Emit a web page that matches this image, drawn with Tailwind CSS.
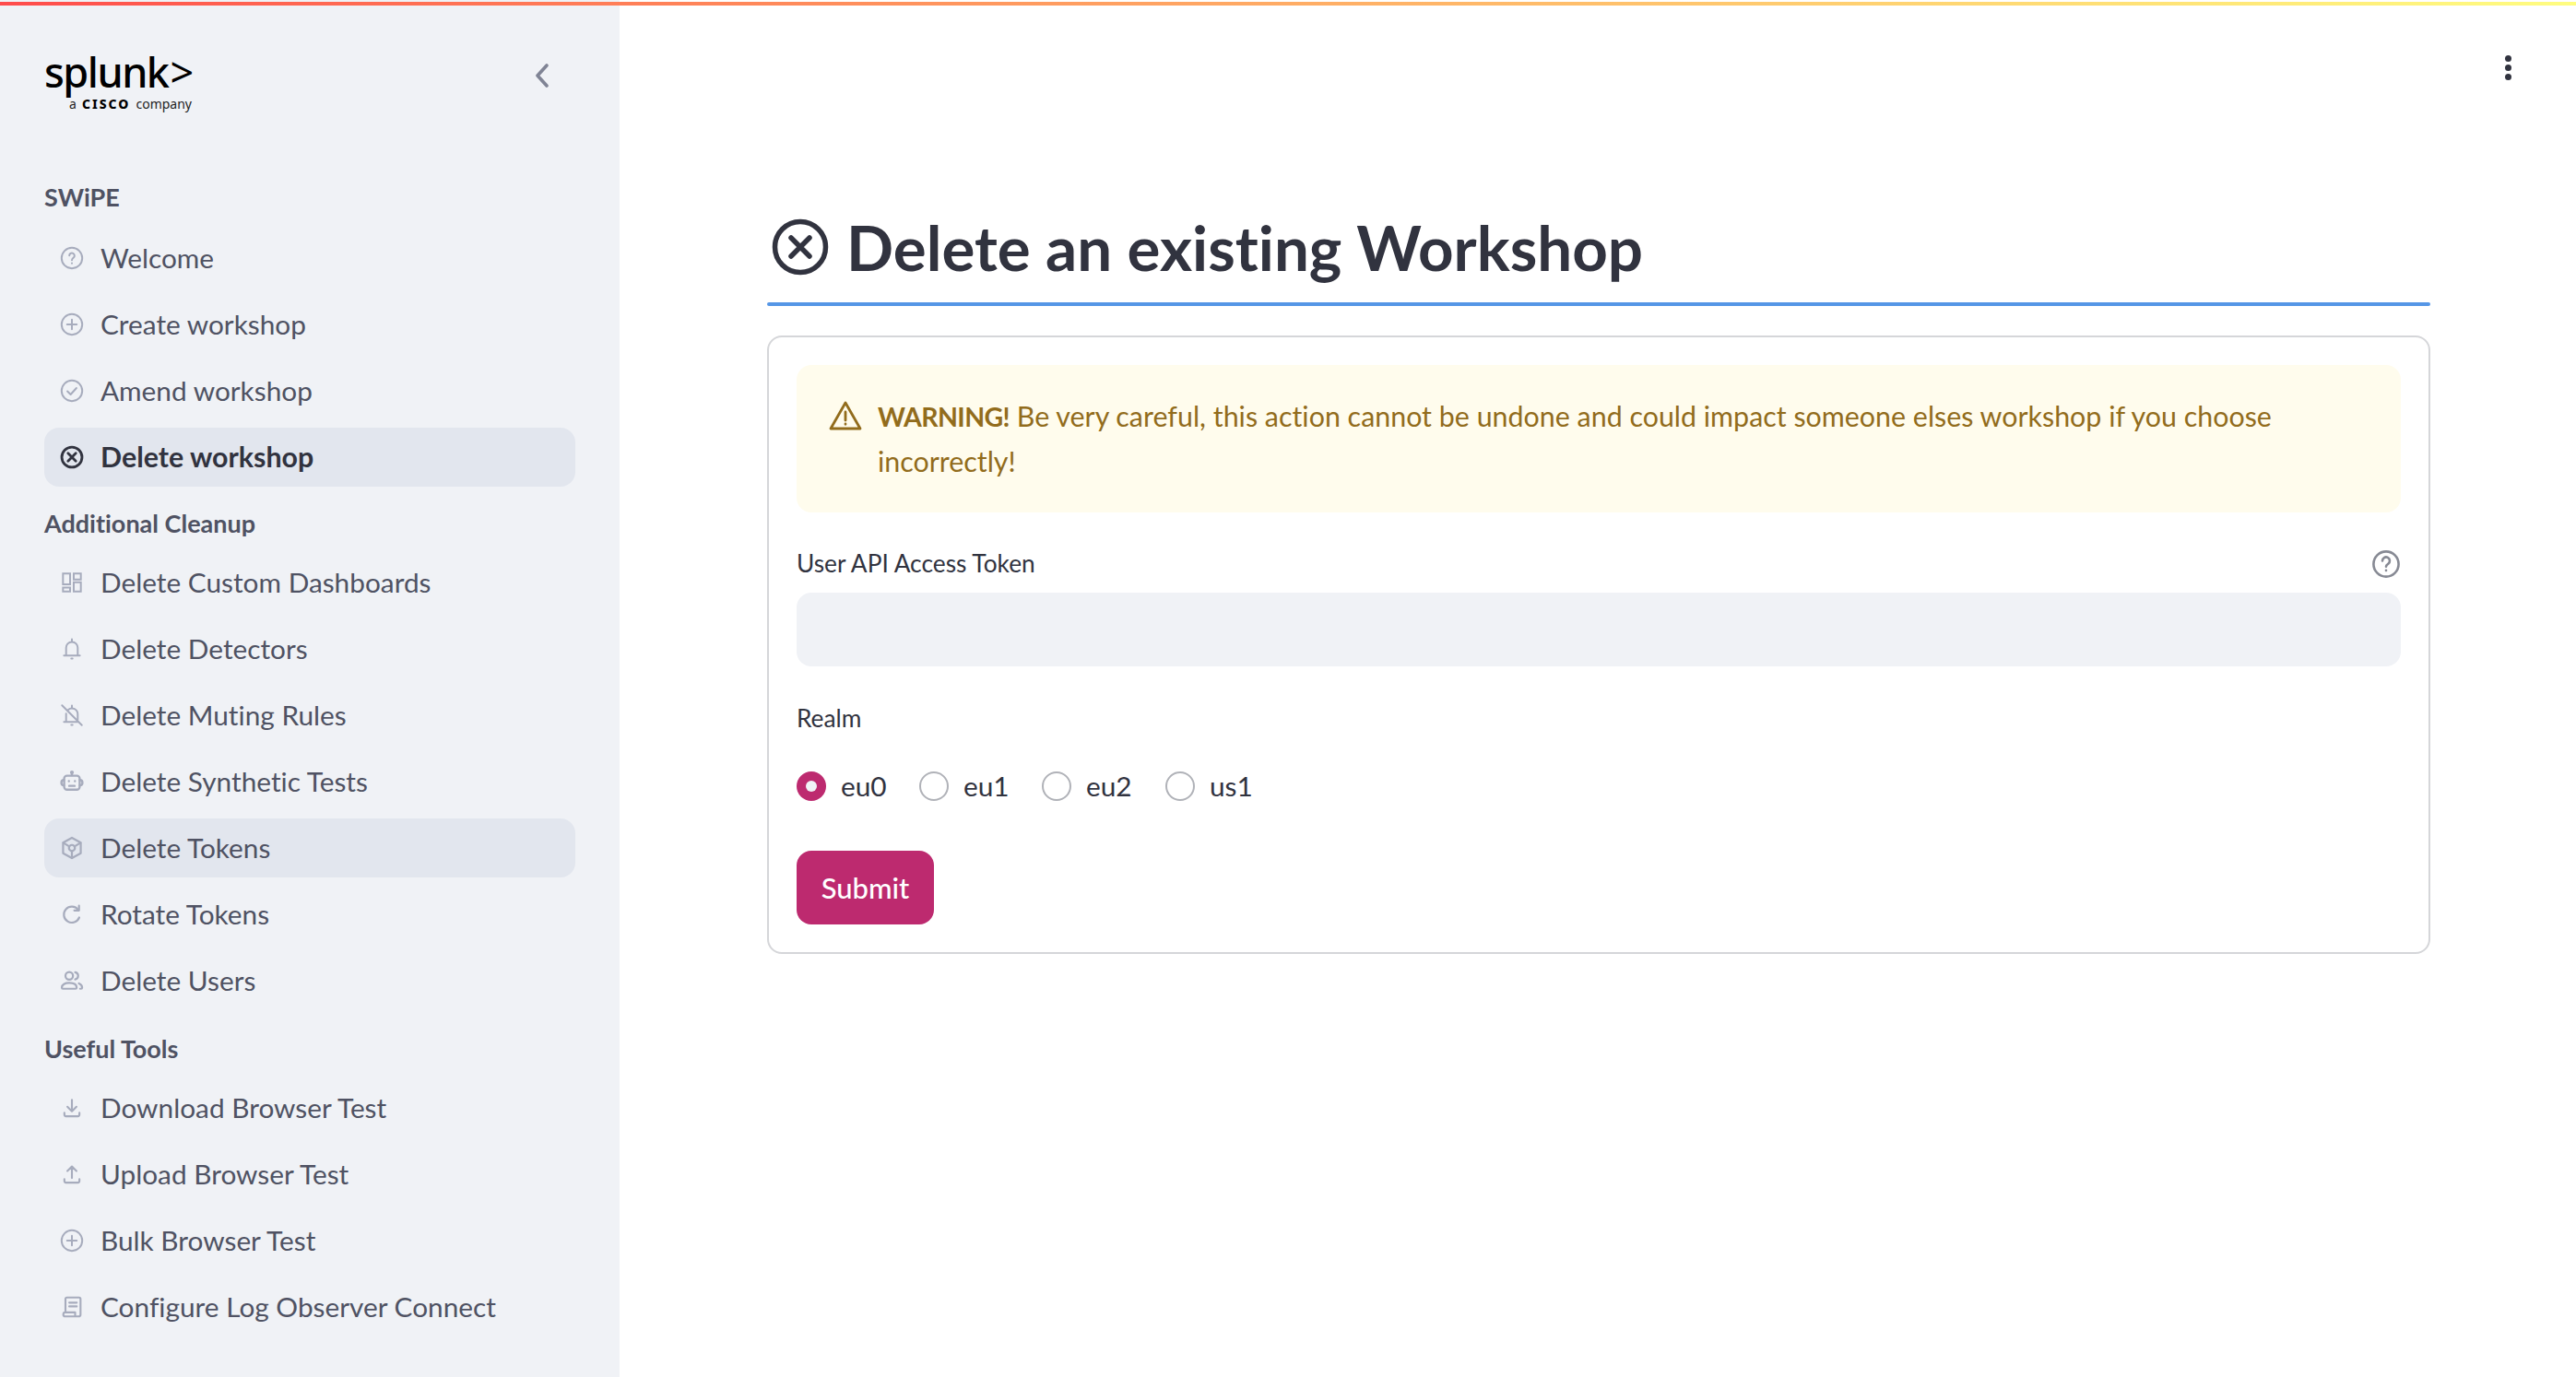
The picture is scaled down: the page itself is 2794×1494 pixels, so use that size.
<!DOCTYPE html>
<html lang="en">
<head>
  <meta charset="UTF-8" />
  <title>Delete an existing Workshop</title>
  <script src="https://cdn.jsdelivr.net/npm/@tailwindcss/browser@4"></script>
</head>
<body class="bg-white text-[#31333f] font-['Lato',sans-serif] [font-variant-ligatures:none] h-screen w-screen overflow-hidden">
  <!-- top decoration bar -->
  <div class="absolute top-[2px] left-0 right-0 h-[4px] bg-gradient-to-r from-[#ff4b4b] to-[#fffd80]"></div>

  <div class="flex h-full">
    <!-- sidebar -->
    <aside class="w-[672px] shrink-0 bg-[#f0f2f6] px-[48px] pt-[53px]">
      <div class="flex justify-between h-[139px]">
        <div class="w-[170px]">
          <div class="flex items-center h-[50px] font-['Noto_Sans',sans-serif] font-medium text-[45px] leading-[50px] tracking-[-1.5px] text-black"><span>splunk</span><span class="ml-[2px] font-normal">&gt;</span></div>
          <div class="flex items-center justify-end gap-[6px] mt-[3px] font-['Noto_Sans',sans-serif] text-[14px] leading-[14px] text-[#222] w-[160px]"><span>a</span><span class="font-extrabold tracking-[2px] text-black">CISCO</span><span>company</span></div>
        </div>
        <svg class="mt-[16px] mr-[27px]" width="18" height="26" viewBox="0 0 18 26" fill="none" stroke="#808495" stroke-width="3.6" stroke-linecap="round" stroke-linejoin="round"><path d="M14 2 4 13l10 11"/></svg>
      </div>

      <nav class="flex flex-col gap-[8px] text-[#4f5263] text-[29.8px]">
        <div class="h-[44px] mb-[4px] leading-[44px] text-[27px] font-bold">SWiPE</div>
        <a class="flex items-center h-[64px] pl-[16px] gap-[17px] rounded-[16px]">
          <svg class="w-[28px] h-[28px]" viewBox="0 0 24 24" fill="none" stroke="#a7acbd" stroke-width="1.7" stroke-linecap="round"><circle cx="12" cy="12" r="9.6"/><path d="M9.6 9.7a2.4 2.4 0 1 1 3.9 1.9c-.9.7-1.5 1.2-1.5 2.3"/><path d="M12 16.8v.1"/></svg>
          Welcome</a>
        <a class="flex items-center h-[64px] pl-[16px] gap-[17px] rounded-[16px]">
          <svg class="w-[28px] h-[28px]" viewBox="0 0 24 24" fill="none" stroke="#a7acbd" stroke-width="1.7" stroke-linecap="round"><circle cx="12" cy="12" r="9.6"/><path d="M12 7.5v9M7.5 12h9"/></svg>
          Create workshop</a>
        <a class="flex items-center h-[64px] pl-[16px] gap-[17px] rounded-[16px]">
          <svg class="w-[28px] h-[28px]" viewBox="0 0 24 24" fill="none" stroke="#a7acbd" stroke-width="1.7" stroke-linecap="round" stroke-linejoin="round"><circle cx="12" cy="12" r="9.6"/><path d="m7.8 12.4 3 3 5.4-6"/></svg>
          Amend workshop</a>
        <a class="flex items-center h-[64px] pl-[16px] gap-[17px] rounded-[16px] bg-[#e2e6ee] text-[#31333f] text-[30.4px] font-bold">
          <svg class="w-[28px] h-[28px]" viewBox="0 0 24 24" fill="none" stroke="#31333f" stroke-width="2.4" stroke-linecap="round"><circle cx="12" cy="12" r="9.4"/><path d="m8.4 8.4 7.2 7.2M15.6 8.4l-7.2 7.2"/></svg>
          Delete workshop</a>

        <div class="h-[44px] mt-[10px] mb-[2px] leading-[44px] text-[27px] font-bold">Additional Cleanup</div>
        <a class="flex items-center h-[64px] pl-[16px] gap-[17px] rounded-[16px]">
          <svg class="w-[28px] h-[28px]" viewBox="0 0 24 24" fill="none" stroke="#a7acbd" stroke-width="1.7"><path d="M3.7 3.7h6.6v10H3.7zM13.7 3.7h6.6v5.6h-6.6zM13.7 11.7h6.6v8.6h-6.6zM3.7 16.7h6.6v3.6H3.7z"/></svg>
          Delete Custom Dashboards</a>
        <a class="flex items-center h-[64px] pl-[16px] gap-[17px] rounded-[16px]">
          <svg class="w-[28px] h-[28px]" viewBox="0 0 24 24" fill="none" stroke="#a7acbd" stroke-width="1.7" stroke-linecap="round"><path d="M6.6 18v-7c0-3 2.2-5.4 5.4-5.4s5.4 2.4 5.4 5.4v7"/><path d="M4.6 18.2h14.8M12 3v2.4M11.4 21h1.2"/></svg>
          Delete Detectors</a>
        <a class="flex items-center h-[64px] pl-[16px] gap-[17px] rounded-[16px]">
          <svg class="w-[28px] h-[28px]" viewBox="0 0 24 24" fill="none" stroke="#a7acbd" stroke-width="1.7" stroke-linecap="round"><path d="M6.6 10.5V18M8.6 6.8A5.4 5.4 0 0 1 17.4 11v5"/><path d="M4.6 18.2H17M12 3v2.4M11.4 21h1.2M2.8 2.8l18.4 18.4"/></svg>
          Delete Muting Rules</a>
        <a class="flex items-center h-[64px] pl-[16px] gap-[17px] rounded-[16px]">
          <svg class="w-[28px] h-[28px]" viewBox="0 0 24 24" fill="none" stroke="#a7acbd" stroke-width="2" stroke-linecap="round" stroke-linejoin="round"><rect x="4.8" y="6.5" width="14.4" height="13" rx="2.6"/><path d="M4.6 10.5c-1.6 0-2.4 1-2.4 2.5s.8 2.500 2.400 2.500M19.400 10.500c1.600 0 2.400 1 2.400 2.500s-.8 2.500-2.400 2.500M12 6V4"/><circle cx="12" cy="3.500" r=".8"/><path d="M9.500 16h5M9.200 11.500v.1M14.800 11.500v.1"/></svg>
          Delete Synthetic Tests</a>
        <a class="flex items-center h-[64px] pl-[16px] gap-[17px] rounded-[16px] bg-[#e2e6ee]">
          <svg class="w-[28px] h-[28px]" viewBox="0 0 24 24" fill="none" stroke="#a7acbd" stroke-width="1.9" stroke-linejoin="round" stroke-linecap="round"><path d="M12 2.500 20.200 7v10L12 21.500 3.800 17V7z"/><circle cx="12" cy="12" r="2.800"/><path d="M4 7.200l5.600 3.400M20 7.200l-5.600 3.400M12 14.800v6.500"/></svg>
          Delete Tokens</a>
        <a class="flex items-center h-[64px] pl-[16px] gap-[17px] rounded-[16px]">
          <svg class="w-[28px] h-[28px]" viewBox="0 0 24 24" fill="none" stroke="#a7acbd" stroke-width="1.9" stroke-linecap="round" stroke-linejoin="round"><path d="M18.800 15a7.400 7.400 0 1 1-1-7.200"/><path d="M18.600 4v4.400h-4.400"/></svg>
          Rotate Tokens</a>
        <a class="flex items-center h-[64px] pl-[16px] gap-[17px] rounded-[16px]">
          <svg class="w-[28px] h-[28px]" viewBox="0 0 24 24" fill="none" stroke="#a7acbd" stroke-width="1.9" stroke-linecap="round" stroke-linejoin="round"><circle cx="9.500" cy="7.500" r="3.500"/><path d="M2.600 18.400c0-2.800 3-4.300 6.900-4.300s6.900 1.500 6.900 4.300c0 .7-.4 1.100-1 1.100H3.600c-.6 0-1-.4-1-1.100z"/><path d="M15 4.200c2 .4 2.800 1.800 2.800 3.300S17 10.400 15 10.800M18.500 14.500c1.900.7 3 2 3 3.900 0 .7-.3 1.100-.9 1.100h-1"/></svg>
          Delete Users</a>

        <div class="h-[44px] mt-[12px] mb-[2px] leading-[44px] text-[27px] font-bold">Useful Tools</div>
        <a class="flex items-center h-[64px] pl-[16px] gap-[17px] rounded-[16px]">
          <svg class="w-[28px] h-[28px]" viewBox="0 0 24 24" fill="none" stroke="#a7acbd" stroke-width="1.8" stroke-linecap="round" stroke-linejoin="round"><path d="M12 4.500V15M7.800 11 12 15.200 16.200 11M5 16.500v1.800c0 .9.600 1.500 1.500 1.500h11c.9 0 1.500-.6 1.500-1.500v-1.800"/></svg>
          Download Browser Test</a>
        <a class="flex items-center h-[64px] pl-[16px] gap-[17px] rounded-[16px]">
          <svg class="w-[28px] h-[28px]" viewBox="0 0 24 24" fill="none" stroke="#a7acbd" stroke-width="1.8" stroke-linecap="round" stroke-linejoin="round"><path d="M12 15.500V5M7.800 9 12 4.800 16.200 9M5 16.500v1.800c0 .9.600 1.500 1.500 1.500h11c.9 0 1.500-.6 1.500-1.500v-1.800"/></svg>
          Upload Browser Test</a>
        <a class="flex items-center h-[64px] pl-[16px] gap-[17px] rounded-[16px]">
          <svg class="w-[28px] h-[28px]" viewBox="0 0 24 24" fill="none" stroke="#a7acbd" stroke-width="1.7" stroke-linecap="round"><circle cx="12" cy="12" r="9.600"/><path d="M12 7.500v9M7.500 12h9"/></svg>
          Bulk Browser Test</a>
        <a class="flex items-center h-[64px] pl-[16px] gap-[17px] rounded-[16px]">
          <svg class="w-[28px] h-[28px]" viewBox="0 0 24 24" fill="none" stroke="#a7acbd" stroke-width="1.8" stroke-linecap="round" stroke-linejoin="round"><path d="M6 16.500V4.500c0-.8.500-1.300 1.300-1.300h11.400c.8 0 1.300.5 1.300 1.300V19c0 1.100-.8 1.800-1.800 1.800H5.800C4.800 20.800 4 20 4 19c0-1.100.8-2 1.800-2H15v3.500"/><path d="M9.500 8h7M9.500 11.500h7"/></svg>
          Configure Log Observer Connect</a>
      </nav>
    </aside>

    <!-- main -->
    <main class="relative flex-1 pl-[160px] pr-[158px] pt-[226px]">
      <button class="absolute top-[60px] right-[70px] flex flex-col gap-[3px]">
        <span class="w-[7px] h-[7px] rounded-full bg-[#31333f]"></span>
        <span class="w-[7px] h-[7px] rounded-full bg-[#31333f]"></span>
        <span class="w-[7px] h-[7px] rounded-full bg-[#31333f]"></span>
      </button>

      <h1 class="flex items-center gap-[17px] h-[84px] pl-[3px] text-[67.3px] leading-[84px] font-bold text-[#31333f]">
        <svg class="w-[66px] h-[66px] shrink-0" viewBox="0 0 66 66" fill="none" stroke="#31333f" stroke-width="5.5" stroke-linecap="round"><circle cx="33" cy="33" r="27.5"/><path d="m23 23 20 20M43 23 23 43"/></svg>
        Delete an existing Workshop
      </h1>
      <div class="h-[4px] mt-[18px] rounded-full bg-[#5596e6]"></div>

      <section class="mt-[32px] h-[671px] rounded-[16px] border-2 border-[#d5d6d9] p-[30px]">
        <div class="flex h-[160px] rounded-[16px] bg-[#fffced] pl-[34px] pr-[32px] pt-[31px] text-[#926c1c]">
          <svg class="w-[38px] h-[34px] mt-[7px] shrink-0" viewBox="0 0 38 34" fill="none" stroke="#926c1c" stroke-width="2.8" stroke-linejoin="round" stroke-linecap="round"><path d="M19 3 35 31H3z"/><path d="M19 13v9M19 26v.3"/></svg>
          <p class="ml-[16px] text-[30.4px] leading-[48px]"><b class="font-bold text-[28.5px] tracking-[-0.6px]">WARNING!</b> Be very careful, this action cannot be undone and could impact someone elses workshop if you choose incorrectly!</p>
        </div>

        <div class="mt-[38px] flex items-center justify-between h-[36px] text-[26.3px]">
          <span>User API Access Token</span>
          <svg class="w-[32px] h-[32px]" viewBox="0 0 32 32" fill="none" stroke="#878a94" stroke-width="2.6" stroke-linecap="round"><circle cx="16" cy="16" r="13.6"/><path d="M12 12.500a4 4 0 1 1 6.300 3.200c-1.400 1-2.300 1.500-2.300 3"/><path d="M16 22.800v.2"/></svg>
        </div>
        <div class="mt-[13px] h-[80px] rounded-[16px] bg-[#f0f2f6]"></div>

        <div class="mt-[38px] h-[36px] leading-[36px] text-[26.3px]">Realm</div>

        <div class="mt-[39px] flex items-center h-[34px] text-[29.8px]">
          <label class="flex items-center gap-[16px] w-[133px]"><span class="flex items-center justify-center w-[32px] h-[32px] rounded-full bg-[#bd2a6f]"><span class="w-[12px] h-[12px] rounded-full bg-[#f0f2f6]"></span></span>eu0</label>
          <label class="flex items-center gap-[16px] w-[133px]"><span class="w-[32px] h-[32px] rounded-full border-2 border-[#b0b2b8]"></span>eu1</label>
          <label class="flex items-center gap-[16px] w-[134px]"><span class="w-[32px] h-[32px] rounded-full border-2 border-[#b0b2b8]"></span>eu2</label>
          <label class="flex items-center gap-[16px] w-[133px]"><span class="w-[32px] h-[32px] rounded-full border-2 border-[#b0b2b8]"></span>us1</label>
        </div>

        <button class="mt-[53px] block w-[149px] h-[80px] rounded-[16px] bg-[#bd2a6f] text-white text-[31px] font-medium">Submit</button>
      </section>
    </main>
  </div>
</body>
</html>
